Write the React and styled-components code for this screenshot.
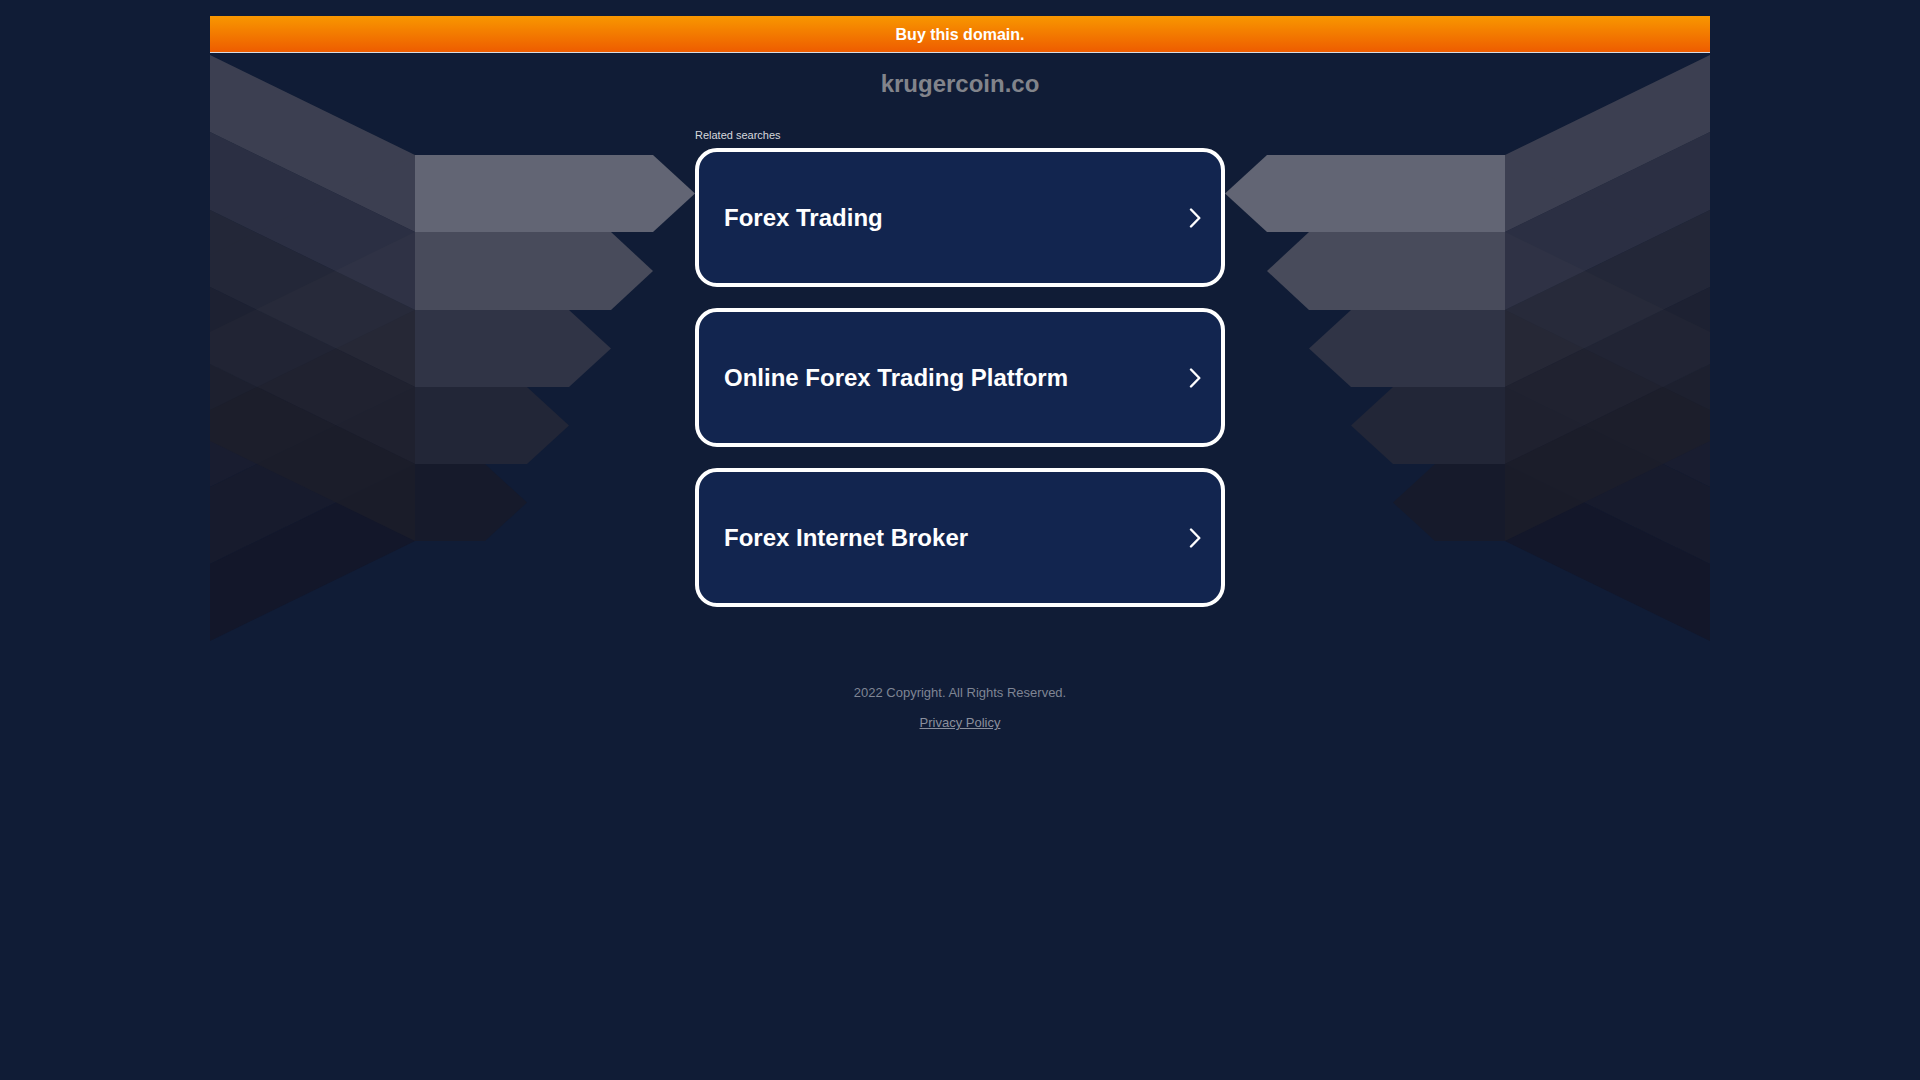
import React from "react";
import styled, { createGlobalStyle, css } from "styled-components";

const GlobalStyle = createGlobalStyle`
  html, body {
    margin: 0;
    padding: 0;
    background: #101c36;
    font-family: "Liberation Sans", Arial, sans-serif;
  }
`;

const Container = styled.div`
  width: 1500px;
  margin: 16px auto 0;
`;

const BuyBar = styled.a`
  display: block;
  height: 36px;
  line-height: 37px;
  text-align: center;
  color: #ffffff;
  font-size: 16px;
  font-weight: bold;
  text-decoration: none;
  background: linear-gradient(180deg, #f89700 0%, #f37a00 50%, #ee5c00 100%);
  border-bottom: 1px solid #d9dbe1;
`;

const Stage = styled.div`
  display: grid;
  grid-template-columns: 485px 530px 485px;
  align-items: start;
`;

const WingSvg = styled.svg`
  display: block;
  width: 485px;
  height: 588px;
  ${(p) =>
    p.$flip &&
    css`
      transform: scaleX(-1);
    `}
`;

const Center = styled.main`
  display: flex;
  flex-direction: column;
`;

const DomainTitle = styled.h1`
  margin: 0;
  padding-top: 16px;
  font-size: 24px;
  line-height: 30px;
  font-weight: bold;
  color: #82848b;
  text-align: center;
`;

const RelatedLabel = styled.div`
  margin-top: 29px;
  font-size: 11px;
  line-height: 14px;
  color: #d6d8dd;
`;

const CardList = styled.div`
  margin-top: 6px;
  display: flex;
  flex-direction: column;
  gap: 21px;
`;

const SearchCard = styled.a`
  box-sizing: border-box;
  height: 139px;
  display: flex;
  align-items: center;
  justify-content: space-between;
  padding: 0 20px 0 25px;
  border: 4px solid #ffffff;
  border-radius: 22px;
  background: #12254f;
  color: #ffffff;
  text-decoration: none;
  cursor: pointer;
`;

const CardLabel = styled.span`
  font-size: 24px;
  font-weight: bold;
  line-height: 30px;
  color: #ffffff;
`;

const ChevronSvg = styled.svg`
  display: block;
  width: 12px;
  height: 20px;
  flex: none;
`;

const Footer = styled.footer`
  margin-top: 44px;
  display: flex;
  flex-direction: column;
  align-items: center;
  gap: 15px;
  font-size: 13px;
  line-height: 15px;
`;

const Copyright = styled.div`
  color: #7f8594;
`;

const PrivacyLink = styled.a`
  color: #8a8f9c;
  text-decoration: underline;
`;

const BANDS = [102, 179, 257, 334, 411, 488];
const U_COLORS = ["#4d4e5c", "#363848", "#2b2c39", "#232431", "#1d1e29"];
const D_COLORS = ["#111b36", "#1e263d", "#191d30", "#171b2d", "#13172a"];
const ARROW_COLORS = ["#626574", "#484b5b", "#303446", "#222637", "#161a2b"];

function Wing({ flip }) {
  return (
    <WingSvg $flip={flip} viewBox="0 0 485 588" aria-hidden="true">
      {D_COLORS.map((c, i) => (
        <polygon
          key={"d" + i}
          fill={c}
          points={`0,${BANDS[i] + 100} 205,${BANDS[i]} 205,${BANDS[i + 1]} 0,${BANDS[i + 1] + 100}`}
        />
      ))}
      {U_COLORS.map((c, i) => (
        <polygon
          key={"u" + i}
          fill={c}
          fillOpacity="0.72"
          points={`0,${BANDS[i] - 100} 205,${BANDS[i]} 205,${BANDS[i + 1]} 0,${BANDS[i + 1] - 100}`}
        />
      ))}
      {ARROW_COLORS.map((c, i) => {
        const end = 443 - 42 * i;
        const tip = end + 42;
        const mid = (BANDS[i] + BANDS[i + 1]) / 2;
        return (
          <polygon
            key={"a" + i}
            fill={c}
            points={`205,${BANDS[i]} ${end},${BANDS[i]} ${tip},${mid} ${end},${BANDS[i + 1]} 205,${BANDS[i + 1]}`}
          />
        );
      })}
    </WingSvg>
  );
}

function Chevron() {
  return (
    <ChevronSvg viewBox="0 0 12 20" aria-hidden="true">
      <polyline
        points="2,1.5 10.3,10 2,18.5"
        fill="none"
        stroke="#ffffff"
        strokeWidth="2.4"
        strokeLinecap="round"
        strokeLinejoin="round"
      />
    </ChevronSvg>
  );
}

const SEARCHES = ["Forex Trading", "Online Forex Trading Platform", "Forex Internet Broker"];

export default function App() {
  return (
    <>
      <GlobalStyle />
      <Container>
        <BuyBar href="#">Buy this domain.</BuyBar>
        <Stage>
          <Wing />
          <Center>
            <DomainTitle>krugercoin.co</DomainTitle>
            <RelatedLabel>Related searches</RelatedLabel>
            <CardList>
              {SEARCHES.map((s) => (
                <SearchCard key={s} href="#">
                  <CardLabel>{s}</CardLabel>
                  <Chevron />
                </SearchCard>
              ))}
            </CardList>
          </Center>
          <Wing flip />
        </Stage>
        <Footer>
          <Copyright>2022 Copyright. All Rights Reserved.</Copyright>
          <PrivacyLink href="#">Privacy Policy</PrivacyLink>
        </Footer>
      </Container>
    </>
  );
}
